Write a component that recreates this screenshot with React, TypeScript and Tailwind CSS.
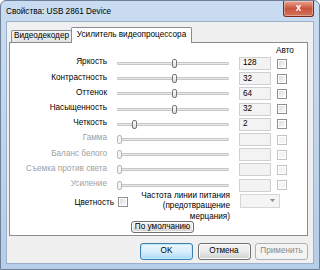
import React from "react";

type Row = { label: string; value?: string; thumb: number; disabled?: boolean };

const rows: Row[] = [
  { label: "Яркость", value: "128", thumb: 57 },
  { label: "Контрастность", value: "32", thumb: 57 },
  { label: "Оттенок", value: "64", thumb: 57 },
  { label: "Насыщенность", value: "32", thumb: 57 },
  { label: "Четкость", value: "2", thumb: 17 },
  { label: "Гамма", thumb: 2, disabled: true },
  { label: "Баланс белого", thumb: 2, disabled: true },
  { label: "Съемка против света", thumb: 2, disabled: true },
  { label: "Усиление", thumb: 2, disabled: true },
];

function Checkbox({ disabled }: { disabled?: boolean }) {
  return (
    <div
      className={`w-[10px] h-[10px] border ${
        disabled ? "border-[#c4c4c4]" : "border-[#8e8f8f]"
      } bg-white p-[1px]`}
    >
      <div
        className={`w-full h-full ${
          disabled ? "bg-[#f4f4f4]" : "bg-gradient-to-br from-[#dcdcdc] to-[#fbfbfb]"
        }`}
      />
    </div>
  );
}

function Slider({ thumb, disabled }: { thumb: number; disabled?: boolean }) {
  return (
    <div className="relative w-[112px] h-[15px] flex items-center">
      <div className="w-full h-[3px] border border-[#c6c6c6] bg-[#e9e9e9] rounded-[1px]" />
      <div
        className={`absolute top-[3px] w-[5px] h-[9px] rounded-[2px] border ${
          disabled ? "border-[#b8b8b8] bg-[#f4f4f4]" : "border-[#777] bg-gradient-to-b from-white to-[#dadada]"
        }`}
        style={{ left: thumb - 2 }}
      />
    </div>
  );
}

function WinButton({
  children,
  kind,
  className,
}: {
  children: React.ReactNode;
  kind?: "default" | "disabled";
  className?: string;
}) {
  const look =
    kind === "default"
      ? "border-[#3c7fb1] bg-gradient-to-b from-[#eaf6fd] via-[#d9f0fc] to-[#a7d9f5] text-black shadow-[inset_0_0_0_1px_#c7e8fb]"
      : kind === "disabled"
      ? "border-[#adb2b5] bg-[#f4f4f4] text-[#8a8a8a]"
      : "border-[#707070] bg-gradient-to-b from-[#f2f2f2] via-[#ebebeb] to-[#cfcfcf] text-black shadow-[inset_0_0_0_1px_#fcfcfc]";
  return (
    <div
      className={`flex items-center justify-center border rounded-[3px] text-[8.2px] leading-none ${look} ${className ?? ""}`}
    >
      {children}
    </div>
  );
}

export default function App() {
  return (
    <div className="w-[320px] h-[270px] bg-gradient-to-b from-[#c9dcf1] to-[#b6cde8] font-['Liberation_Sans',Arial,sans-serif] text-black rounded-t-[6px] border border-[#6f8099] overflow-hidden">
      {/* title bar */}
      <div className="h-[20px] flex items-start justify-between">
        <span className="ml-[5px] mt-[6px] text-[8.2px] leading-[10px]">Свойства: USB 2861 Device</span>
        <div className="mr-[5px] w-[31px] h-[16px] rounded-b-[3px] border border-t-0 border-[#7a2c20] bg-gradient-to-b from-[#e8a493] via-[#c9533c] to-[#d3735c] flex items-center justify-center shadow-[inset_0_0_0_1px_rgba(255,255,255,0.35)]">
          <span className="text-white text-[10px] font-bold leading-none -mt-[1px]">x</span>
        </div>
      </div>

      {/* client area */}
      <div className="ml-[5px] w-[308px] h-[243px] bg-[#f0f0f0] border border-[#9cb0c9] text-[8.2px]">
        {/* tabs */}
        <div className="h-[20px] flex items-end pl-[4px]">
          <div className="w-[61px] h-[12px] border border-b-0 border-[#898c95] rounded-t-[2px] bg-gradient-to-b from-[#f4f4f4] to-[#e3e3e3] flex items-center justify-center leading-none">
            Видеодекодер
          </div>
          <div className="relative z-10 -ml-[1px] -mb-[1px] w-[121px] h-[16px] border border-b-0 border-[#898c95] rounded-t-[2px] bg-white flex items-center justify-center leading-none pb-[1px]">
            Усилитель видеопроцессора
          </div>
        </div>

        {/* tab panel */}
        <div className="ml-[2px] w-[299px] h-[194px] border border-[#898c95] bg-white">
          <div className="h-[13px] flex items-end">
            <span className="ml-[266px] leading-none mb-[1px]">Авто</span>
          </div>

          <div className="flex flex-col">
            {rows.map((r) => (
              <div key={r.label} className="h-[15.2px] flex items-center">
                <span
                  className={`w-[97px] text-right leading-none -mt-[2px] ${
                    r.disabled ? "text-[#a0a0a0]" : "text-black"
                  }`}
                >
                  {r.label}
                </span>
                <div className="ml-[10px]">
                  <Slider thumb={r.thumb} disabled={r.disabled} />
                </div>
                <div className="ml-[10px] w-[32px] h-[13px] border border-[#cfd0d3] bg-[#f3f3f3] flex items-center pl-[3px] leading-none">
                  {r.value ?? ""}
                </div>
                <div className="ml-[6px]">
                  <Checkbox disabled={r.disabled} />
                </div>
              </div>
            ))}
          </div>

          {/* colour / power line */}
          <div className="flex items-start -mt-[2px]">
            <span className="w-[104px] text-right leading-none mt-[8px]">Цветность</span>
            <div className="ml-[4px] mt-[6px]">
              <Checkbox />
            </div>
            <div className="ml-[6px] w-[96px] text-right leading-[10.5px] whitespace-nowrap">
              Частота линии питания
              <br />
              (предотвращение
              <br />
              мерцания)
            </div>
            <div className="ml-[10px] mt-[3px] w-[40px] h-[14px] border border-[#d5d6d9] bg-[#f4f4f4] flex items-center justify-end pr-[4px]">
              <svg width="5" height="3" viewBox="0 0 5 3">
                <path d="M0 0h5L2.5 3z" fill="#8a8a8a" />
              </svg>
            </div>
          </div>

          <div className="ml-[121px] -mt-[1px]">
            <WinButton className="w-[63px] h-[12px] rounded-[2px]">По умолчанию</WinButton>
          </div>
        </div>

        {/* dialog buttons */}
        <div className="mt-[7px] flex justify-end gap-[4.5px] pr-[5px]">
          <WinButton kind="default" className="w-[53px] h-[17px]">
            OK
          </WinButton>
          <WinButton className="w-[53px] h-[17px]">Отмена</WinButton>
          <WinButton kind="disabled" className="w-[53px] h-[17px]">
            Применить
          </WinButton>
        </div>
      </div>
    </div>
  );
}
